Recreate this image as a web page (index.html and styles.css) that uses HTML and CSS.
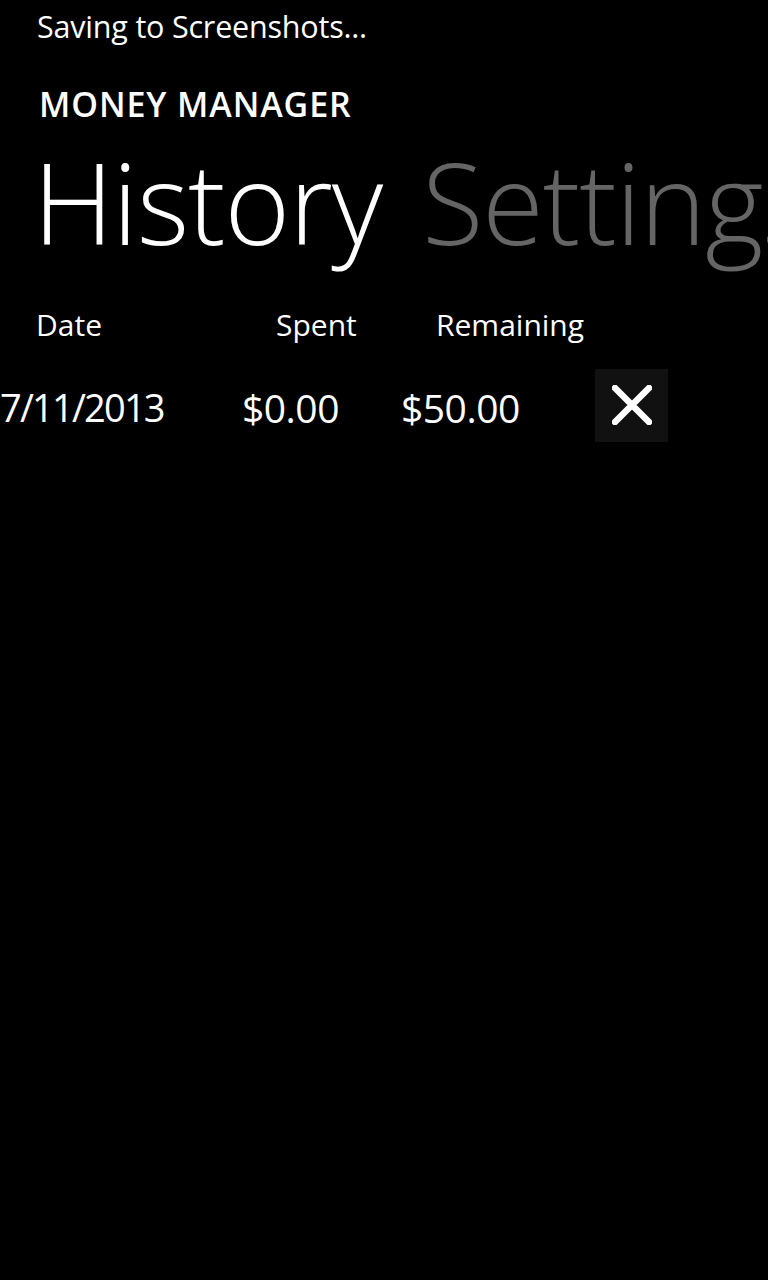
FILE: index.html
```html
<!DOCTYPE html>
<html>
<head>
<meta charset="utf-8">
<link rel="stylesheet" href="styles.css">
</head>
<body>
<div class="status">Saving to Screenshots...</div>
<div class="app-title">MONEY MANAGER</div>
<div class="pivot">
  <span class="pivot-item active">History</span>
  <span class="pivot-item">Settings</span>
</div>
<div class="table">
  <div class="head">
    <span class="c-date">Date</span>
    <span class="c-spent">Spent</span>
    <span class="c-rem">Remaining</span>
  </div>
  <div class="row">
    <span class="c-date v date">7/11/2013</span>
    <span class="c-spent v">$0.00</span>
    <span class="c-rem v">$50.00</span>
    <button class="del" aria-label="delete">
      <svg width="40" height="40" viewBox="0 0 40 40"><path d="M3 3 L37 37 M37 3 L3 37" stroke="#fff" stroke-width="6.5" stroke-linecap="round" fill="none"/></svg>
    </button>
  </div>
</div>
</body>
</html>
```
FILE: styles.css
```css
html, body {
  margin: 0;
  padding: 0;
  background: #000;
  color: #fff;
  font-family: "Open Sans", "Noto Sans", sans-serif;
  width: 768px;
  height: 1280px;
  overflow: hidden;
}
.status {
  font-size: 30.5px;
  line-height: 40px;
  padding: 6px 0 0 37px;
  height: 42px;
  letter-spacing: -0.2px;
}
.app-title {
  font-size: 34px;
  font-weight: 600;
  line-height: 40px;
  margin-top: 36px;
  padding-left: 39px;
  letter-spacing: 0.9px;
}
.pivot {
  white-space: nowrap;
  display: flex;
  gap: 40px;
  padding-left: 33px;
  margin-top: 13px;
  height: 140px;
  width: 768px;
  box-sizing: border-box;
  overflow: hidden;
}
.pivot-item {
  flex-shrink: 0;
  font-size: 112px;
  font-weight: 300;
  line-height: 130px;
  letter-spacing: -1px;
  color: #656565;
}
.pivot-item.active { color: #fff; }
.table { margin-top: 28px; }
.head {
  display: flex;
  font-size: 30px;
  line-height: 40px;
  height: 40px;
}
.head .c-date { width: 239px; padding-left: 36px; box-sizing: border-box; }
.head .c-spent { width: 160px; padding-left: 37px; box-sizing: border-box; }
.head .c-rem { padding-left: 37px; }
.row {
  display: flex;
  align-items: center;
  margin-top: 23px;
  height: 74px;
}
.v { font-size: 39px; letter-spacing: -0.5px; padding-top: 4px; }
.v.date { font-size: 38px; letter-spacing: -1.8px; }
.row .c-date { width: 242px; padding-left: 0; }
.row .c-spent { width: 159px; }
.row .c-rem { width: 194px; }
.del {
  width: 73px;
  height: 73px;
  background: #111;
  border: none;
  padding: 0;
  display: flex;
  align-items: center;
  justify-content: center;
}
```
